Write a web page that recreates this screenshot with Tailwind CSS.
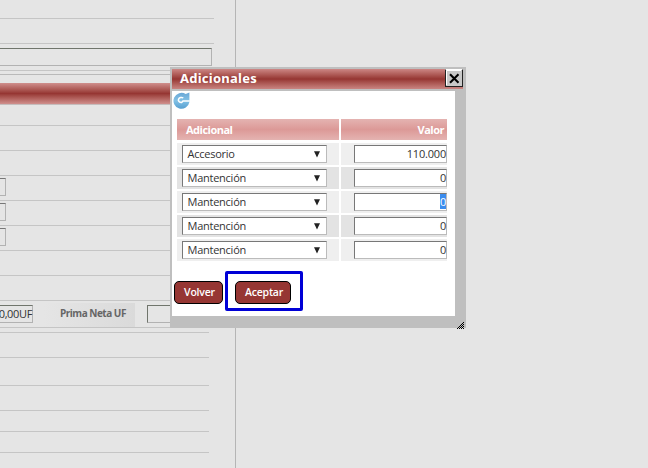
<!DOCTYPE html>
<html lang="es">
<head>
<meta charset="utf-8">
<title>Adicionales</title>
<script src="https://cdn.jsdelivr.net/npm/@tailwindcss/browser@4"></script>
</head>
<body class="w-[648px] h-[468px] overflow-hidden bg-[#e5e5e5] font-['Open_Sans',sans-serif] text-[11px] text-[#333]">
<main class="relative w-[648px] h-[468px] overflow-hidden">
  <!-- Form behind the dialog -->
  <section class="w-[236px] h-[468px] border-r border-[#b5b5b5] flex flex-col *:shrink-0">
    <div class="h-[19px] w-[214px] border-b border-[#c5c5c5]"></div>
    <div class="h-[25px] w-[214px] border-b border-[#c5c5c5]"></div>
    <div class="h-[27px] w-[212px] border-b border-[#c5c5c5] pt-1"><div class="h-[18px] border border-l-0 border-[#b2b2b2] border-t-[#70756c]"></div></div>
    <div class="h-[4px] w-[212px] border-b border-[#b9b9b9]"></div>
    <div class="h-[8px]"></div>
    <div class="h-[22px] w-[212px] border-b border-[#c5bcbc] bg-linear-to-b from-[#cf8f8d] via-[#963633] to-[#cf8f8d]"></div>
    <div class="h-[21px] w-[209px] border-b border-[#c5c5c5]"></div>
    <div class="h-[25px] w-[209px] border-b border-[#c5c5c5]"></div>
    <div class="h-[25px] w-[209px] border-b border-[#c5c5c5]"></div>
    <div class="h-[25px] w-[209px] border-b border-[#c5c5c5] pt-[2px]"><div class="w-[6px] h-[18px] border border-l-0 border-[#b2b2b2] border-t-[#777]"></div></div>
    <div class="h-[25px] w-[209px] border-b border-[#c5c5c5] pt-[2px]"><div class="w-[6px] h-[18px] border border-l-0 border-[#b2b2b2] border-t-[#777]"></div></div>
    <div class="h-[25px] w-[209px] border-b border-[#c5c5c5] pt-[2px]"><div class="w-[6px] h-[18px] border border-l-0 border-[#b2b2b2] border-t-[#777]"></div></div>
    <div class="h-[25px] w-[209px] border-b border-[#c5c5c5]"></div>
    <div class="h-[25px] w-[209px] border-b border-[#c5c5c5]"></div>
    <div class="h-[27px] w-[209px] border-b border-[#c5c5c5] flex pt-[2px]">
      <div class="mt-[2px] w-[33px] h-[18px] border border-l-0 border-[#b2b2b2] border-t-[#70756c] flex justify-end items-center whitespace-nowrap text-[11px] tracking-[-0.35px]">0,00UF</div>
      <div class="ml-[11px] w-[91px] h-[24px] pl-4 bg-linear-to-r from-[#e5e5e5] to-[#dadada] font-bold text-[10px] tracking-[-0.5px] leading-[20px] text-[#666] whitespace-nowrap">Prima Neta UF</div>
      <div class="mt-[2px] ml-[12px] w-[60px] h-[18px] border border-[#b2b2b2] border-t-[#70756c] border-l-[#70756c]"></div>
    </div>
    <div class="h-[5px] w-[209px] border-b border-[#c5c5c5]"></div>
    <div class="h-[25px] w-[209px] border-b border-[#c5c5c5]"></div>
    <div class="h-[28px] w-[209px] border-b border-[#c5c5c5]"></div>
    <div class="h-[25px] w-[209px] border-b border-[#c5c5c5]"></div>
    <div class="h-[21px] w-[209px] border-b border-[#c5c5c5]"></div>
    <div class="h-[21px] w-[209px] border-b border-[#c5c5c5]"></div>
  </section>

  <!-- Dialog window -->
  <section class="absolute left-[170px] top-[67px] w-[296px] h-[261px] bg-[#bfbfbf] pl-[2px] pt-[2px]">
    <header class="w-[291px] h-[20px] flex justify-between bg-linear-to-b from-[#cc8785] via-[#963633] to-[#c98582]">
      <h1 class="pl-2 font-['Noto_Sans',sans-serif] font-bold text-[13px] tracking-[0.25px] leading-[19px] text-white">Adicionales</h1>
      <button class="w-[18px] h-[18px] bg-[#c8c8c8] border border-t-white border-l-[#222] border-r-[#222] border-b-[#222] flex items-center justify-center" aria-label="Cerrar">
        <svg class="w-[16px] h-[16px] shrink-0" viewBox="0 0 16 16"><path d="M.5 15V.5H15" fill="none" stroke="#fff"/><path d="M4 4.2L12.5 12.7M12.5 4.2L4 12.7" stroke="#000" stroke-width="2.1"/></svg>
      </button>
    </header>
    <div class="mt-[2px] w-[283px] h-[225px] bg-white">
      <div class="h-[28px] pl-px pt-px">
        <svg class="w-[17px] h-[17px]" viewBox="0 0 17 17"><defs><linearGradient id="g" x2="0" y2="1"><stop stop-color="#6aa7d6"/><stop offset=".5" stop-color="#82c1e5"/><stop offset="1" stop-color="#579fd0"/></linearGradient></defs><path d="M12.7 2L16.4 .6V10A8 8 0 1 1 12.7 2Z" fill="url(#g)"/><path d="M10.3 6A3 2.6 0 1 0 8.6 10.6L10 9H16.8" fill="none" stroke="#fff" stroke-width="1.5"/></svg>
      </div>
      <div class="ml-[5px] w-[270px] grid grid-cols-[162px_106px] gap-x-[2px] font-bold text-white leading-[22px] tracking-[-0.5px]">
        <div class="h-[21px] pl-[9px] bg-linear-to-b from-[#e4b3b1] via-[#dc9997] to-[#e4b3b1]">Adicional</div>
        <div class="h-[21px] pr-[3px] text-right bg-linear-to-b from-[#e4b3b1] via-[#dc9997] to-[#e4b3b1]">Valor</div>
      </div>
      <div id="rows" class="ml-[5px] mt-[3px] w-[270px] flex flex-col gap-[2px]"></div>
      <footer class="flex mt-[10px] ml-[2px] items-start">
        <button class="mt-[10px] w-[49px] h-[23px] rounded-[5px] border border-black bg-[#963633] text-white leading-[21px] font-semibold text-[10.5px] tracking-[-0.2px] pl-[2px]">Volver</button>
        <div class="ml-[2px] w-[78px] h-[40px] border-3 border-[#0000d6] rounded-[2px] pt-[7px] pl-[7px]">
          <button class="block w-[56px] h-[23px] rounded-[5px] border border-black bg-[#963633] text-white leading-[21px] font-semibold text-[10.5px] tracking-[-0.2px] pl-[2px]">Aceptar</button>
        </div>
      </footer>
    </div>
    <svg class="absolute left-[287px] top-[255px] w-[8px] h-[7px]" viewBox="0 0 8 7" shape-rendering="crispEdges"><path d="M6 0h1v1h-1zM5 1h1v1h-1zM4 2h1v1h-1zM6 2h1v1h-1zM3 3h1v1h-1zM5 3h1v1h-1zM2 4h1v1h-1zM4 4h1v1h-1zM6 4h1v1h-1zM1 5h1v1h-1zM3 5h1v1h-1zM5 5h1v1h-1zM0 6h1v1h-1zM2 6h1v1h-1zM4 6h1v1h-1zM6 6h1v1h-1z" fill="#000"/></svg>
  </section>
</main>
<script>
const rows = [['Accesorio', '110.000'], ['Mantención', '0'], ['Mantención', '0', true], ['Mantención', '0'], ['Mantención', '0']];
document.getElementById('rows').innerHTML = rows.map(([name, value, selected], i) => {
  const bg = i % 2 ? 'bg-[#e3e3e3]' : 'bg-[#efefef]';
  return `<div class="grid grid-cols-[162px_106px] gap-x-[2px] h-[22px]">
    <div class="${bg} pl-[5px] pt-[2px]"><div class="w-[145px] h-[18px] bg-white border border-[#bbb] border-t-[#777] border-l-[#777] pl-[4.5px] pr-[6px] flex items-center justify-between leading-[16px] tracking-[-0.25px]"><span>${name}</span><svg class="w-[6px] h-[7px]" viewBox="0 0 6 7"><path d="M0 .3H6L3 6.5Z" fill="#222"/></svg></div></div>
    <div class="${bg} pl-[13px] pt-[2px]"><div class="w-[93px] h-[18px] bg-white border border-[#bbb] border-t-[#777] border-l-[#777] text-right leading-[16px] tracking-[-0.2px]"><span class="${selected ? 'bg-[#3b8cee] text-white' : ''}">${value}</span></div></div>
  </div>`;
}).join('');
</script>
</body>
</html>
